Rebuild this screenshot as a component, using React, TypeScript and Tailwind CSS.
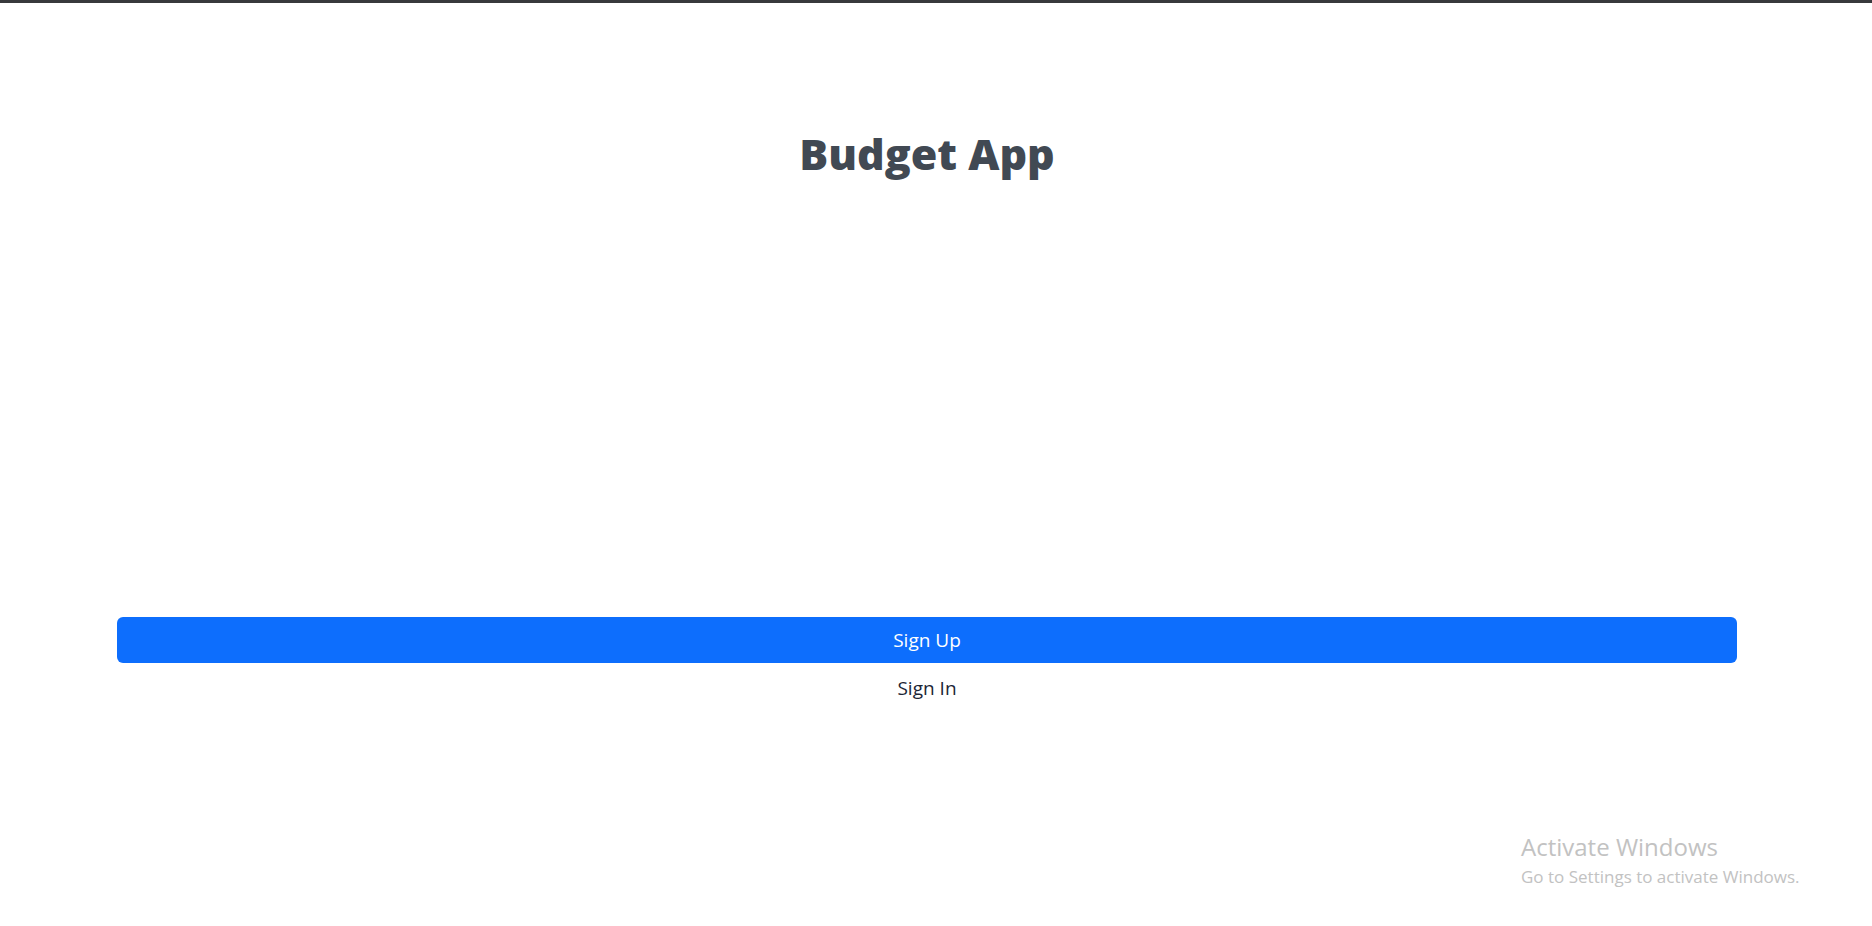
import React from "react";

export default function App() {
  return (
    <div
      className="relative h-[926px] w-full overflow-hidden bg-white border-t-[3px] border-[#38393c]"
      style={{ fontFamily: '"Open Sans", "Noto Sans", sans-serif' }}
    >
      <div className="flex flex-col">
        <h1 className="mt-[127px] h-[48px] text-center text-[43px] leading-[48px] font-extrabold text-[#414953] pr-[18px]">
          Budget App
        </h1>
        <div className="mt-[439px] ml-[117px] mr-[135px] flex flex-col gap-[2px]">
          <button className="h-[46px] w-full rounded-[6px] bg-[#0d6efd] text-[19px] text-white">
            Sign Up
          </button>
          <button className="h-[46px] w-full text-[19px] text-[#1c2636]">
            Sign In
          </button>
        </div>
      </div>
      <div className="absolute left-[1521px] top-[829px] text-[#c2c2c2]">
        <div className="text-[24px] leading-[30px]">Activate Windows</div>
        <div className="mt-[3px] text-[17px] leading-[24px]">Go to Settings to activate Windows.</div>
      </div>
    </div>
  );
}
